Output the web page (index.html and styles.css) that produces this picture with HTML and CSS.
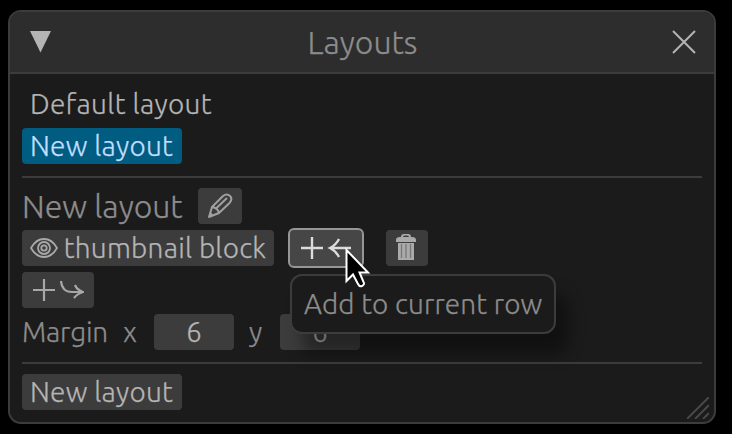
FILE: index.html
```
<!DOCTYPE html>
<html lang="en">
<head>
<meta charset="utf-8">
<title>Layouts</title>
<link rel="stylesheet" href="styles.css">
</head>
<body>
<main class="window">
  <header class="titlebar">
    <svg class="collapse" width="21" height="22" viewBox="0 0 21 22"><path d="M0 0H21L10.500 21.500Z" fill="#b4b4b4"/></svg>
    <h1 class="title">Layouts</h1>
    <svg class="close" width="24" height="24" viewBox="0 0 24 24"><path d="M1 1L23 23M23 1L1 23" stroke="#b4b4b4" stroke-width="2"/></svg>
  </header>
  <section class="content">
    <div class="item"><span class="t-default">Default layout</span></div>
    <div class="item selected"><span class="t-new">New layout</span></div>
    <hr class="separator">
    <div class="row">
      <h2 class="heading">New layout</h2>
      <button class="button edit"><svg width="26" height="26" viewBox="0 0 26 26" fill="none" stroke="#a0a0a0" stroke-width="2" stroke-linejoin="round"><path d="M2 24L5 14L16 3Q20 0 23 3Q26 6 22.500 10L12 20ZM5 14Q11 15 12 20M9 15.500L20 5"/><path d="M2 24L3.500 19L7 22.500Z" fill="#a0a0a0" stroke="none"/></svg></button>
    </div>
    <div class="row">
      <button class="button block"><svg width="28" height="20" viewBox="0 0 28 20" fill="none" stroke="#a8a8a8" stroke-width="1.800"><path d="M1 10Q6 1 14 1T27 10Q22 19 14 19T1 10Z"/><circle cx="14" cy="10" r="6"/><circle cx="14" cy="10" r="2.700"/></svg><span class="t-thumb">thumbnail block</span></button>
      <button class="button add-row hovered"><svg width="52" height="24" viewBox="0 0 52 24" fill="none" stroke="#dcdcdc" stroke-width="2.400"><path d="M1 12H23M12 1V23"/><path d="M51 12H31M39 3Q36 9 30 12Q36 15 39 21"/></svg></button>
      <button class="button trash"><svg width="22" height="28" viewBox="0 0 22 28"><path d="M1 7Q1 4 5 4H6Q6 1 9 1H13Q16 1 16 4H17Q21 4 21 7V9H1ZM8 4H14Q14 2.500 12 2.500H10Q8 2.500 8 4Z" fill="#aaa" fill-rule="evenodd"/><path d="M3 10H19V27H3Z" fill="#aaa"/><path d="M6.500 11V25M11 11V25M15.500 11V25" stroke="#777" stroke-width="1.300"/></svg></button>
    </div>
    <div class="row">
      <button class="button add-line"><svg width="52" height="24" viewBox="0 0 52 24" fill="none" stroke="#a8a8a8" stroke-width="2.200"><path d="M1 12H23M12 1V23"/><path d="M29 3Q30 14 40 14H50M43 7Q45 12 51 14Q45 16 42 20"/></svg></button>
    </div>
    <div class="row margins">
      <span class="t-margin">Margin</span><span class="axis-x">x</span><div class="value">6</div><span class="axis-y">y</span><div class="value">6</div>
    </div>
    <hr class="separator">
    <button class="button new"><span class="t-new">New layout</span></button>
  </section>
  <svg class="grip" width="22" height="22" viewBox="0 0 22 22" stroke="#484848" stroke-width="2"><path d="M0 22L22 0M8 22L22 8M16 22L22 16"/></svg>
</main>
<div class="tooltip" role="tooltip"><span class="t-tip">Add to current row</span></div>
<svg class="cursor" width="26" height="42" viewBox="0 0 26 42"><path d="M1.500 2V33L8 26.500L13 36Q14.500 39 17 38Q20 36.500 18.500 34L14.500 24.500H23Z" fill="#000" stroke="#fff" stroke-width="2"/></svg>
</body>
</html>
```
FILE: styles.css
```
* { box-sizing: border-box; }
body {
  margin: 0;
  width: 732px;
  height: 434px;
  padding: 10px 16px 10px 8px;
  overflow: hidden;
  background: #000;
  color: #8c8c8c;
  font: 300 28px/36px Ubuntu, "Open Sans", "Noto Sans", sans-serif;
  white-space: nowrap;
  -webkit-text-stroke: .25px;
}
svg { display: block; flex: none; }
.window {
  position: relative;
  width: 708px;
  height: 414px;
  border: 2px solid #3c3c3c;
  border-radius: 13px;
  background: #1b1b1b;
  overflow: hidden;
}
.titlebar {
  display: flex;
  align-items: center;
  justify-content: space-between;
  height: 62px;
  padding: 0 18px 0 20px;
  border-bottom: 2px solid #3c3c3c;
  background: #2d2d2d;
}
.title { margin: 0; padding-left: 2px; font-size: 32px; font-weight: 300; }
.content {
  display: flex;
  flex-direction: column;
  align-items: flex-start;
  gap: 6px;
  padding: 12px;
}
.item { height: 36px; padding: 0 8px; border-radius: 4px; color: #b4b4b4; }
.selected { width: 160px; background: #005c80; color: #c0deff; }
.t-new, .t-thumb { letter-spacing: .25px; }
.t-default { letter-spacing: .35px; }
.separator { width: 680px; height: 2px; margin: 6px 0 4px; border: 0; background: #3c3c3c; }
.row { display: flex; align-items: center; height: 36px; }
.heading { margin: 0; width: 176px; font-size: 32px; line-height: 36px; font-weight: 300; }
.button {
  display: flex;
  align-items: center;
  justify-content: center;
  height: 36px;
  padding: 0;
  border: 0;
  border-radius: 4px;
  background: #3c3c3c;
  color: #b4b4b4;
  font: inherit;
}
.edit { width: 44px; }
.block { width: 252px; gap: 6px; }
.add-row { width: 76px; margin-left: 14px; }
.hovered { height: 40px; border: 2px solid #969696; border-radius: 6px; background: #464646; }
.trash { width: 42px; margin-left: 22px; padding-right: 2px; }
.trash svg { margin-top: -2px; }
.add-line { width: 72px; }
.new { width: 160px; padding: 0 8px; justify-content: flex-start; }
.t-margin { width: 101px; letter-spacing: -.2px; }
.axis-x { width: 31px; }
.axis-y { width: 31px; margin-left: 15px; }
.value { width: 80px; height: 36px; border-radius: 4px; background: #3c3c3c; color: #b4b4b4; text-align: center; }
.grip { position: absolute; right: 5px; bottom: 3px; }
.tooltip {
  position: absolute;
  left: 290px;
  top: 274px;
  width: 266px;
  height: 60px;
  padding: 10px 12px;
  border: 2px solid #3c3c3c;
  border-radius: 12px;
  background: #1b1b1b;
  box-shadow: 12px 20px 16px rgba(0, 0, 0, .38);
}
.t-tip { letter-spacing: .13px; }
.cursor { position: absolute; left: 345px; top: 248px; }
```
